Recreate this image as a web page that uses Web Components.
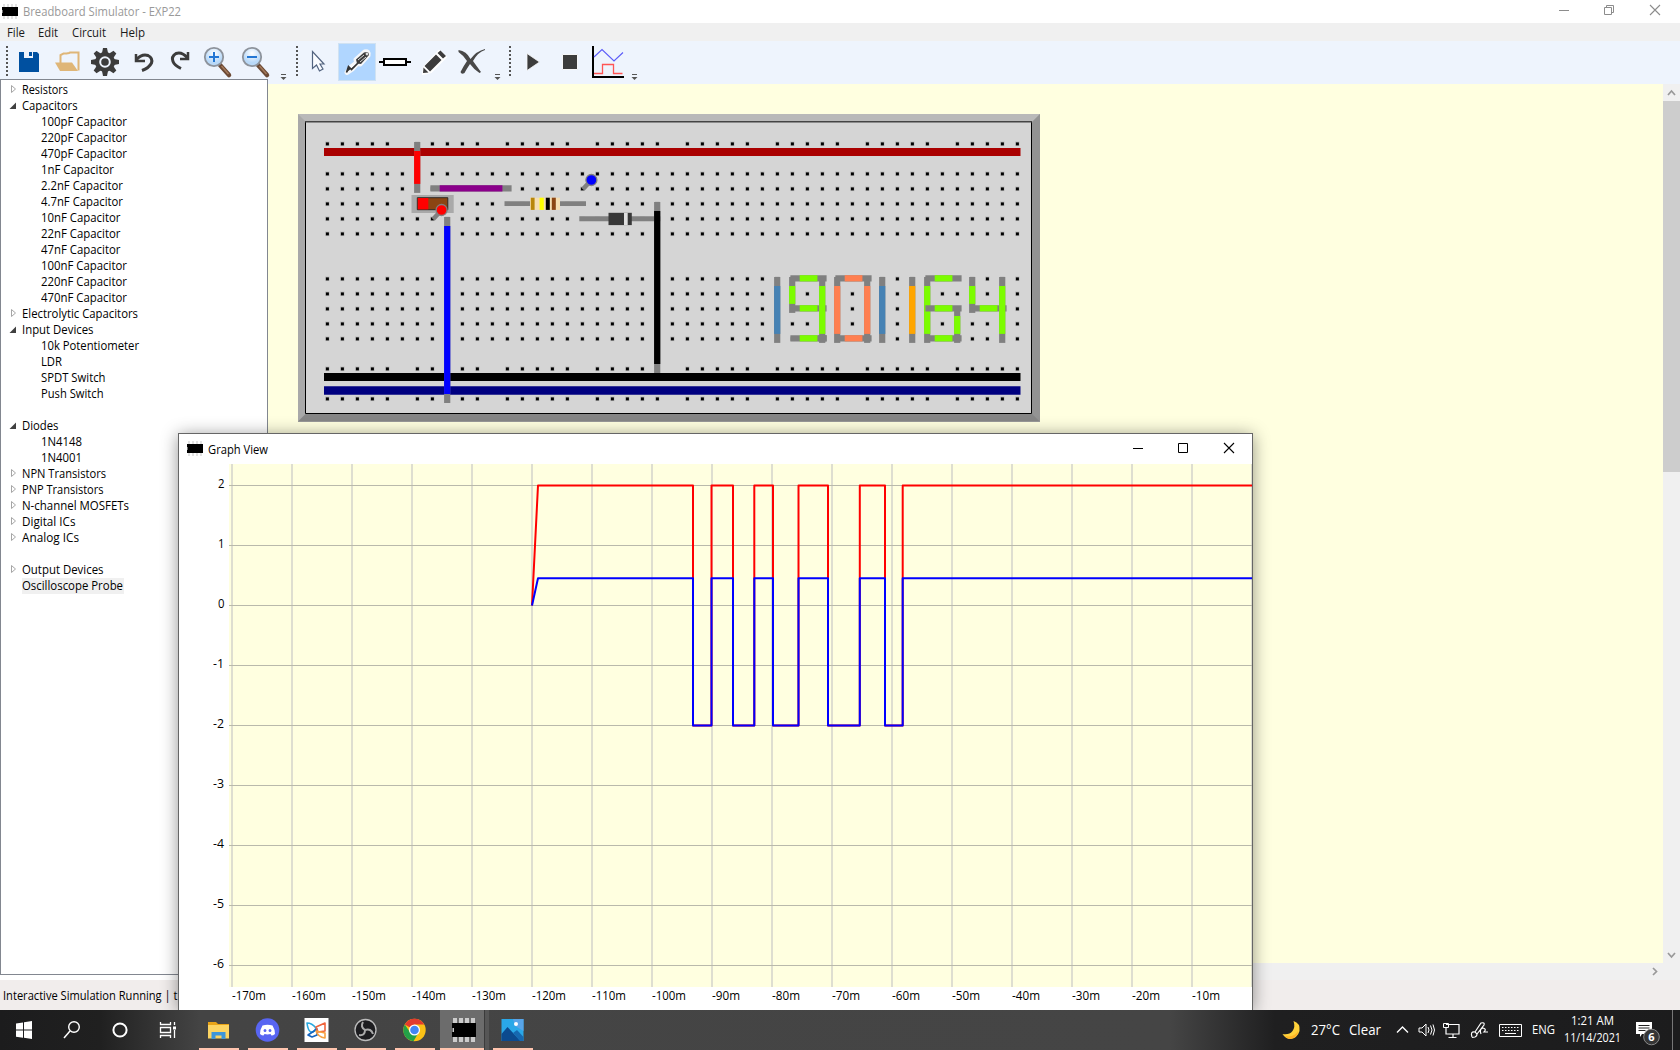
<!DOCTYPE html>
<html lang="en">
<head>
<meta charset="utf-8">
<title>Breadboard Simulator - EXP22</title>
<style>
html,body{margin:0;padding:0;width:1680px;height:1050px;overflow:hidden;background:#fff}
body{font-family:"Open Sans","Noto Sans",sans-serif;font-size:12px;color:#000}
</style>
</head>
<body>
<sim-desktop></sim-desktop>
<script>
const define=(name,html,init)=>customElements.define(name,class extends HTMLElement{
  connectedCallback(){
    if(this.shadowRoot)return;
    this.attachShadow({mode:'open'}).innerHTML=typeof html==='function'?html(this):html;
    if(init)init(this,this.shadowRoot);
  }
});

/* Single line of text set to a given advance width */
define('fit-text','<style>:host{display:inline-block;white-space:nowrap;line-height:16px}span{display:inline-block;transform-origin:0 50%}</style><span><slot></slot></span>',(el,root)=>{
  const w=+el.getAttribute('w'),s=root.querySelector('span');
  if(!w)return;
  const n=s.getBoundingClientRect().width;
  el.style.width=w+'px';
  if(n)s.style.transform=`scaleX(${w/n})`;
});

define('chip-icon',el=>{
  const b=el.hasAttribute('big');
  return `<style>:host{display:block;line-height:0}</style>`+(b?
  `<svg width="24" height="24" viewBox="0 0 24 24"><path d="M1 0h4v24H1zM7 0h4v24H7zM13 0h4v24h-4zM19 0h4v24h-4z" fill="#ccc"/><path d="M0 5h24v14H0v-5h2v-4H0z" fill="#000"/></svg>`:
  `<svg width="16" height="16" viewBox="0 0 16 16"><path d="M1 0h2v15H1zM5 0h2v15H5zM9 0h2v15H9zM13 0h2v15h-2z" fill="#e2e2e2"/><path d="M0 3h16v9H0z" fill="#000"/><path d="M0 6h1v3H0z" fill="#777"/></svg>`);
});

define('title-bar',`<style>
:host{display:flex;height:23px;background:#fff;align-items:center;color:#999}
chip-icon{margin:0 5px 0 2px} .sp{flex:1} svg{display:block}
fit-text{margin-top:1px}
</style><chip-icon></chip-icon><fit-text w="158">Breadboard Simulator - EXP22</fit-text><div class="sp"></div>
<svg width="140" height="23" fill="none" stroke="#8c8c8c"><path d="M19 10.5h10"/><path d="M64.500 7.500h7v7h-7zM66.500 7V5.500h7v7H72"/><path d="M110 5l10 10M120 5l-10 10" stroke-width="1.1"/></svg>`);

define('menu-bar',`<style>:host{display:flex;height:18px;box-sizing:border-box;padding-top:2px;background:#f0f0f0;align-items:center;padding-left:6.800px;gap:13.700px;color:#1a1a1a}
</style><fit-text w="18">File</fit-text><fit-text w="20">Edit</fit-text><fit-text w="34">Circuit</fit-text><fit-text w="25">Help</fit-text>`);

const gearTeeth=[...Array(8)].map((_,i)=>`<path d="M16 10l1-5h4l1 5z" transform="rotate(${i*45} 19 19)"/>`).join('');
const lens=(id,plus)=>`<defs><radialGradient id="${id}" cx=".5" cy=".3"><stop offset="0" stop-color="#fff"/><stop offset="1" stop-color="#b9d9f8"/></radialGradient></defs><path d="M20 22l9 10" stroke="#6c4a35" stroke-width="4.500" stroke-linecap="round"/><path d="M21.500 23l7 8" stroke="#a57a5b" stroke-width="1.500"/><circle cx="14" cy="14" r="9.200" fill="url(#${id})" stroke="#8d939c" stroke-width="1.800"/><path d="M9 14h10${plus?'M14 9v10':''}" stroke="#2377d4" stroke-width="2"/>`;
const icons={
save:'<path d="M9 9h5v6h9V9h4l2 2v18H9z" fill="#0050a0"/><path d="M14 9h9v6h-9z" fill="#eef4fd"/><path d="M19 9h3v4h-3z" fill="#0050a0"/>',
folder:'<path d="M12.500 20v-8l3-1.500h3L21 10l1-.5h8.500v18" fill="none" stroke="#dfb678" stroke-width="2"/><path d="M7 19.500h17l6 8.500H12z" fill="#dfb678"/>',
gear:`<g fill="#3c3c3c">${gearTeeth}<circle cx="19" cy="19" r="10"/></g><g fill="none" stroke="#eef4fd" stroke-width="2"><circle cx="19" cy="19" r="4.800"/></g>`,
undo:'<path d="M12 11v7h9" fill="none" stroke="#3c3c3c" stroke-width="2.500"/><path d="M12.500 16.500Q18 10.500 24 12.500Q29 15 27.500 20Q25 25 18 27.500" fill="none" stroke="#3c3c3c" stroke-width="3"/>',
redo:'<path d="M26 9v7h-8" fill="none" stroke="#3c3c3c" stroke-width="2.500"/><path d="M25.500 15Q20 8.500 14 10.500Q9 13.500 11 18.500Q12.500 22.500 19 25.500" fill="none" stroke="#3c3c3c" stroke-width="3"/>',
zin:lens('a',true),zout:lens('b',false),
cursor:'<path d="M12.500 8.500v17l4-3.500 3 6 3.500-2-3-5h4z" fill="#fafcff" stroke="#52637f" stroke-width="1.200"/>',
driver:'<path d="M8.500 29.500l4.500-6 5-4-.5-3 9-8q5-1 4 4l-8 9-3-.5-4.500 5-6 4z" fill="#f5f7fa" stroke="#f5f7fa" stroke-width="4" stroke-linejoin="round"/><path d="M8.500 29.500l2-6 3 3 7-7" fill="#333" stroke="#333" stroke-width="1.700"/><path d="M18 16.500l8-7q5-2 5 2.500l-8 9-4-.5z" fill="#3c3c3c"/><path d="M20 17l6-5M22 19l6-5" stroke="#ddd"/><circle cx="29" cy="11" r="1.400" fill="#ddd"/>',
resistor:'<path d="M3 19h32" stroke="#000" stroke-width="2"/><path d="M8 16h22v6H8z" fill="#fff" stroke="#000" stroke-width="2"/>',
pencil:'<path d="M9 31l1-7L25 8l7 6-15 15z" fill="#fff" stroke="#fff" stroke-width="2"/><path d="M9 30l.5-5.500 5 5zM10.500 23L22 11.500l5.500 5.500L16 28.500zM23.500 10l3-2.500 5.500 5.500-3 2.500z" fill="#3c3c3c"/>',
cross:'<path d="M6.500 7q8 1 12 9 6-8 14.500-10v1q-7 2-12 11 5 7 8 11l-1.500 1q-6-4-9.500-9-4 6-5.500 9-3 2-4-1 3-6 6.500-11Q11 12 6.500 9z" fill="#484848"/>',
play:'<path d="M14 10.500v17L26.500 19z" fill="#3c3c3c" stroke="#f7f7f7" stroke-width=".8"/>',
stop:'<path d="M11.500 11.500h15v15h-15z" fill="#3c3c3c" stroke="#f7f7f7" stroke-width="1"/>',
graph:'<path d="M4 3v31h31" fill="none" stroke="#000" stroke-width="2"/><path d="M5 14l8-7.500 12 11.500 9-8.500" fill="none" stroke="#5b5bf8" stroke-width="1.100"/><path d="M5 30.500h8.500v-9h11v9h9" fill="none" stroke="#f55" stroke-width="1.300"/>'};
define('tool-button',el=>`<style>:host{display:block;width:38px;height:38px;box-sizing:border-box}:host([active]){background:#b0d6ff;box-shadow:inset 0 0 0 1px #d0e2f2}svg{display:block}</style><svg width="38" height="38" viewBox="0 0 38 38">${icons[el.getAttribute('icon')]}</svg>`);
define('tool-group',`<style>:host{display:flex;height:43px;padding-top:2px;box-sizing:border-box}
.grip{width:4px;padding-left:6px;height:34px;flex:none}.end{width:14px;flex:none}svg{display:block}</style>
<div class="grip"><svg width="2" height="36"><path d="M1 3v31" stroke="#555" stroke-width="2" stroke-dasharray="2 2"/></svg></div><slot></slot><div class="end"><svg width="14" height="38"><path d="M5 31.500h5" stroke="#555"/><path d="M4.500 34h6L7.500 37z" fill="#555"/></svg></div>`);
const tb=l=>l.split(' ').map(i=>`<tool-button icon="${i}"${i==='driver'?' active':''}></tool-button>`).join('');
define('tool-bar',`<style>:host{display:flex;height:43px;background:#eef4fd}tool-group:first-of-type{width:290px}</style>
<tool-group>${tb('save folder gear undo redo zin zout')}</tool-group><tool-group>${tb('cursor driver resistor pencil cross')}</tool-group><tool-group style="margin-left:-1px">${tb('play stop graph')}</tool-group>`);

define('tree-item',el=>{
  const s=el.getAttribute('state');
  const mark=s==='open'?'<path d="M9 8.500V15H2.500z" transform="translate(6 -4)" fill="#404040"/>':s==='closed'?'<path d="M11.500 4.500v7l4-3.500z" transform="translate(-1 -1)" fill="#fff" stroke="#a6a6a6"/>':'';
  return `<style>:host{display:flex;height:16px;align-items:center}svg{flex:none;display:block}:host([child]) svg{width:40px}.l{height:16px;padding:0 1px 0 0}:host([selected]) .l{background:#f0f0f0}fit-text{display:block}</style><svg width="21" height="16">${mark}</svg><div class="l"><fit-text w="${el.getAttribute('w')}">${el.getAttribute('label')}</fit-text></div>`;
});
const tree=[['c','Resistors',46],['o','Capacitors',55.5],['','100pF Capacitor',86],['','220pF Capacitor',86],['','470pF Capacitor',86],['','1nF Capacitor',73],['','2.2nF Capacitor',82],['','4.7nF Capacitor',82],['','10nF Capacitor',79.500],['','22nF Capacitor',79.500],['','47nF Capacitor',79.500],['','100nF Capacitor',86],['','220nF Capacitor',86],['','470nF Capacitor',86],['c','Electrolytic Capacitors',116],['o','Input Devices',71.500],['','10k Potentiometer',98],['','LDR',21],['','SPDT Switch',64.500],['','Push Switch',62.500],null,['o','Diodes',36.500],['','1N4148',41],['','1N4001',41],['c','NPN Transistors',84],['c','PNP Transistors',81.500],['c','N-channel MOSFETs',107],['c','Digital ICs',53.500],['c','Analog ICs',57],null,['c','Output Devices',81.500],['s','Oscilloscope Probe',101]];
define('parts-tree',`<style>:host{display:block;width:268px;height:896px;box-sizing:border-box;border:1px solid #828790;background:#fff;padding-top:2px}.gap{height:16px}</style>`+
 tree.map(t=>t?`<tree-item label="${t[1]}" w="${t[2]}" ${t[0]===''?'child':t[0]==='s'?'selected':`state="${t[0]==='o'?'open':'closed'}"`}></tree-item>`:'<div class="gap"></div>').join(''));

/* Breadboard: viewBox origin is its outer top-left corner */
const X=c=>327.4+15*c, rowsTop=[173.7,188.7,203.7,218.7,233.7], rowsBot=[278.7,293.7,308.7,323.7,338.7];
function board(){
  let s='';
  const hole=(x,y)=>{s+=`<path d="M${x-2.4} ${y-2.2}h4.600v4.600h-4.600z" fill="#bdbdbd"/><path d="M${x-1.5} ${y-1.3}h3v3h-3z" fill="#000"/>`};
  for(let c=0;c<47;c++){
    if(c%6!==5)for(const y of[143.7,368.7,398.7])hole(X(c),y);
    for(const y of[...rowsTop,...rowsBot])hole(X(c),y);
  }
  const bar=(y,h,f)=>{s+=`<path d="M324 ${y}h696.500v${h}H324z" fill="${f}"/>`};
  bar(148,8,'#aa0000');bar(373,8,'#000');bar(386.2,8.5,'#000080');
  const v=(c,y1,y2,f)=>{const x=X(c)-3.300;s+=`<path d="M${x} ${y1-1.700}h6.200v${y2-y1+5.900}h-6.200z" fill="#808080"/><path d="M${x} ${y1+7.300}h6.200v${y2-y1-12.100}h-6.200z" fill="${f}"/>`};
  const h=(c1,c2,y,f)=>{const x=X(c1)-2,w=X(c2)-X(c1)+6.200;s+=`<path d="M${x} ${y-3.500}h${w}v6.200H${x}z" fill="#808080"/><path d="M${x+9.300} ${y-3.500}h${w-18.500}v6.200h${18.500-w}z" fill="${f}"/>`};
  v(6,143.7,188.7,'#f00');h(7,12,188.7,'#8b008b');
  s+='<path d="M411.500 195h42.200v18h-42.200z" fill="#a9a9a9"/><path d="M417.300 197.700h30.500v12h-30.500z" fill="#8b4513" stroke="#222" stroke-width=".9"/><path d="M417.800 198h10.500v11.400h-10.500z" fill="#f00"/>';
  v(8,218.7,398.7,'#00f');
  s+='<path d="M504.500 201.200h81.500v4.900h-81.500z" fill="#808080"/><path d="M530 197.700h30v12.200h-30z" fill="#f5deb3"/><path d="M530.800 197.700h3.800v12.200h-3.800z" fill="#b8860b"/><path d="M539.600 197.700h4.200v12.200h-4.200z" fill="#ff0"/><path d="M545.800 197.700h4v12.200h-4z" fill="#000"/><path d="M551.800 197.700h4v12.200h-4z" fill="#8b4513"/>';
  s+='<path d="M579.300 216.300h81v5h-81z" fill="#808080"/><path d="M608.500 212.800h23.300v12.300h-23.300z" fill="#383838"/><path d="M624 212.800h3.700v12.300H624z" fill="#e0e0e0"/>';
  v(22,203.7,368.7,'#000');
  const probe=(x,y,f)=>{s+=`<path d="M${x} ${y}l-8.500 9.300" stroke="#808080" stroke-width="4.500"/><circle cx="${x}" cy="${y}" r="5.500" fill="${f}" stroke="#808080" stroke-width="1.300"/>`};
  probe(441.6,210,'#f00');probe(591.4,180,'#00f');
  const [a,,m,,z]=rowsBot,g='#7cfc00',o='#ff7f50',b='#4682b4';
  v(30,a,z,b);
  h(31,33,a,g);v(31,a,m,g);h(31,33,m,g);v(33,a,z,g);h(31,33,z,g);
  s+=`<path d="M${X(33)-4.2} ${z-3.500}h8.500v6.200h-8.500z" fill="#808080"/>`;
  h(34,36,a,o);v(34,a,z,o);v(36,a,z,o);h(34,36,z,o);
  v(37,a,z,b);v(39,a,z,'#ffa500');
  h(40,42,a,g);v(40,a,z,g);h(40,42,m,g);v(42,m,z,g);h(40,42,z,g);
  v(43,a,m,g);h(43,45,m,g);v(45,a,z,g);
  return s;
}
define('bread-board',`<style>:host{display:block;width:742px;height:308px}svg{display:block}</style>
<svg width="742" height="308" viewBox="298 114 742 308"><path d="M298 114h742v308H298z" fill="#a9a9a9"/><path d="M298 114h742l-8 8H306z" fill="#b9b9b9"/><path d="M1040 114v307.500l-8-8V122z" fill="#939393"/><path d="M298 421.500h742l-8-8H306z" fill="#868686"/><path d="M305.500 121.500h726v292h-726z" fill="#d5d5d5" stroke="#000"/><path d="M305 121.700h727" stroke="#444" stroke-width="1.500"/>${board()}</svg>`);

define('scroll-v',`<style>:host{display:flex;flex-direction:column;width:17px;height:879px;background:#f0f0f0}.t{height:371px;background:#cdcdcd}.f{flex:1}svg{display:block}</style>
<svg width="17" height="17"><path d="M5 11l3.500-4 3.500 4" fill="none" stroke="#999" stroke-width="1.700"/></svg><div class="t"></div><div class="f"></div><svg width="17" height="17"><path d="M5 7l3.500 4L12 7" fill="none" stroke="#999" stroke-width="1.700"/></svg>`);
define('work-area',`<style>:host{display:block;width:1412px}.row{display:flex}.canvas{width:1395px;height:879px;background:#ffffe0;box-sizing:border-box;padding:30px 0 0 30px}.h{height:17px;background:#f0f0f0;display:flex;justify-content:flex-end;padding-right:17px}svg{display:block}</style>
<div class="row"><div class="canvas"><bread-board></bread-board></div><scroll-v></scroll-v></div><div class="h"><svg width="17" height="17"><path d="M7 5l3.500 3.500L7 12" fill="none" stroke="#999" stroke-width="1.700"/></svg></div>`);
define('status-bar',`<style>:host{display:flex;height:30px;background:#f1edec;align-items:center;padding:2px 0 0 3px;box-sizing:border-box}</style><fit-text w="174.500">Interactive Simulation Running | t</fit-text>`);

define('graph-plot',()=>{
  let s='<path d="M229 464h1023v523H229z" fill="#ffffe0"/>';
  for(let x=232;x<1253;x+=60)s+=`<path d="M${x} 464v523" stroke="#deded0" stroke-width="2"/>`;
  for(let y=485.5;y<987;y+=60)s+=`<path d="M229 ${y}h1023" stroke="#b9b9ab"/>`;
  const e=[693,711.5,733,754.3,773,798.5,828,859.8,885,902.7];
  const line=(hi,col)=>{let d=`M532 605.500L538 ${hi}`,low=false;e.forEach(x=>{d+=`H${x}V${low?hi:725.5}`;low=!low});return `<path d="${d}H1252" fill="none" stroke="${col}" stroke-width="2" stroke-linejoin="round"/>`};
  s+=line(485.5,'#f00')+line(578.2,'#00f');
  return `<style>:host{display:flex;flex-direction:column;height:546px}.main{display:flex}.y{width:45px;padding:12px 0 0 0;display:flex;flex-direction:column;gap:44px;height:511px;box-sizing:border-box;align-items:flex-end;margin-right:5px}.x{display:flex;padding:0 0 0 53px;height:18px}.x div{width:60px;flex:none}svg{display:block}.main{height:523px}.y fit-text{height:16px}</style>
  <div class="main"><div class="y">${[2,1,0,-1,-2,-3,-4,-5,-6].map(n=>`<fit-text w="${n<0?11:6.5}">${n}</fit-text>`).join('')}</div><svg width="1023" height="523" viewBox="229 464 1023 523">${s}</svg></div>
  <div class="x">${[...Array(17)].map((_,i)=>`<div><fit-text w="${i>7?28:34}">-${170-i*10}m</fit-text></div>`).join('')}</div>`;
});
define('graph-window',`<style>:host{display:block;width:1073px;height:576px;border:1px solid #666;border-bottom:0;background:#fff;box-shadow:0 2px 16px rgba(0,0,0,.42)}.t{display:flex;height:30px;align-items:center}chip-icon{margin:0 5px 0 8px}.sp{flex:1}svg{display:block}fit-text{margin-top:1px}</style>
<div class="t"><chip-icon></chip-icon><fit-text w="60">Graph View</fit-text><div class="sp"></div><svg width="140" height="30" fill="none" stroke="#000"><path d="M21 14.500h10M66.500 9.500h9v9h-9z"/><path d="M112 9l10 10M122 9l-10 10" stroke-width="1.100"/></svg></div><graph-plot></graph-plot>`);

const apps={
start:'<path d="M16 13.500l7-1v7h-7zM24 12.300l8-1.300v8.500h-8zM16 20.500h7v7.200l-7-1zM24 20.500h8V29l-8-1.200z" fill="#fff"/>',
search:'<circle cx="26" cy="17" r="5.300" fill="none" stroke="#fff" stroke-width="1.400"/><path d="M22 21l-6 7" stroke="#fff" stroke-width="1.500"/>',
cortana:'<circle cx="24" cy="20" r="6.600" fill="none" stroke="#fff" stroke-width="2"/>',
task:'<path d="M16.500 12v2.500h10V12M16.500 28v-2.500h10V28M16.500 17.500h10v5h-10zM30.500 12v3M30.500 20v8" fill="none" stroke="#fff" stroke-width="1.300"/><path d="M29 16.500h3v3h-3z" fill="#fff"/>',
files:'<path d="M14 12h8l2 2h11v14H14z" fill="#e8a317"/><path d="M14 15h21v13.500H14z" fill="#fcd462"/><path d="M17.500 29v-7h14v7h-4v-3.500h-6V29z" fill="#3d95d8"/>',
discord:'<circle cx="24.500" cy="20" r="11.800" fill="#5865f2"/><path d="M19.500 15.500q5-1.500 10 0 2.500 4 2.500 8.500-2 1.500-3.500 1.500l-1-1.500q-3 .8-6 0l-1 1.500q-1.500 0-3.500-1.500 0-4.500 2.500-8.500z" fill="#fff"/><ellipse cx="22" cy="20.500" rx="1.400" ry="1.600" fill="#5865f2"/><ellipse cx="27" cy="20.500" rx="1.400" ry="1.600" fill="#5865f2"/>',
fly:'<path d="M12.500 8h24v24h-24z" fill="#fff"/><g fill="none" stroke-width="1.600" stroke-linejoin="round"><path d="M15 13q5 0 9 5-2 5-5 4-3-1-4-9z" stroke="#29a9e0"/><path d="M16 25l9-6v6l-5 2z" stroke="#1464c0"/><path d="M24 17l9-4v8l-7 1z" stroke="#f0643c"/><path d="M24 21l9 2v5q-7-1-9-7z" stroke="#f8a040"/></g>',
obs:'<circle cx="24.500" cy="20" r="10.500" fill="#1d1d20" stroke="#bbb" stroke-width="1.300"/><g stroke="#aaa" stroke-width="2" fill="none"><path d="M24 20q-5-3-2-8M24 20q6-2 8 4M24 20q0 6-6 5"/></g>',
chrome:'<circle cx="24.500" cy="20" r="11.200" fill="#fbc116"/><path d="M24.500 20L14.800 14.400a11.200 11.200 0 0 1 19.400 0H24.500z" fill="#e33b2e"/><path d="M14.800 14.400a11.200 11.200 0 0 0 8.700 16.800l5-8.400-8.500-.5z" fill="#24a148"/><circle cx="24.500" cy="20" r="5.500" fill="#fff"/><circle cx="24.500" cy="20" r="4.300" fill="#4285f4"/>',
photos:'<path d="M13.500 9h22v22h-22z" fill="#2aa8e8"/><path d="M25 9h10.500v12L27 16z" fill="#58a4e8"/><path d="M13.500 24l6-7 13 14h-19z" fill="#0c4a8e"/><path d="M25 23l4-3 6.500 7v4H32z" fill="#1668b0"/><circle cx="28" cy="14" r="2" fill="#fff"/>'};
define('task-app',el=>{const k=el.getAttribute('icon'),run=el.hasAttribute('run');
return `<style>:host{display:flex;flex-direction:column;align-items:center;width:${run?49:48}px;height:40px;box-sizing:border-box}:host([active]){background:linear-gradient(90deg,#6c6c6c 0 44.500px,#3b3b3b 44.500px 45.500px,#565656 45.500px)}:host([active]) .u{width:44px;align-self:flex-start}:host([active]) chip-icon{margin:8px 0 6px 0}svg{display:block}:host([run]) svg{margin-right:2px}.u{width:40px;height:2px;background:#ffc4ae}</style>${k==='chip'?'<chip-icon big></chip-icon>':`<svg width="${run?49:48}" height="38">${apps[k]}</svg>`}${run?'<div class="u"></div>':''}`});
define('task-bar',`<style>
:host{display:flex;height:40px;background:linear-gradient(90deg,#1c1c1d 0,#202020 100px,#444 200px,#454545 1170px,#1f1f20 1275px,#1c1c1d);color:#fff}
.apps{display:flex;padding-left:2.500px}.sp{flex:1}.tray{display:flex;width:399px;align-items:center;font-size:12px}svg{display:block;flex:none}.w{font-size:14px;display:flex;gap:9px;margin-left:6px}.eng{margin-left:1px}.clock{width:60px;display:flex;flex-direction:column;align-items:center;margin:-1px 0 0 8.500px;gap:1.500px}
.n{font:bold 11px "Open Sans",sans-serif;fill:#fff}
</style>
<task-app icon="start"></task-app><task-app icon="search"></task-app><task-app icon="cortana"></task-app><task-app icon="task"></task-app>
<div class="apps">${['files','discord','fly','obs','chrome'].map(i=>`<task-app run icon="${i}"></task-app>`).join('')}<task-app run active icon="chip"></task-app><task-app run icon="photos"></task-app></div>
<div class="sp"></div>
<div class="tray"><svg width="24" height="40"><path d="M12.500 11q7 2 6 10-2 7-9 8-5 0-8-5 7 1 10-3 3-4 1-10z" fill="#ffd23b"/><path d="M4 26q9 2 13-5 0 6-7 8-4 0-6-3z" fill="#ffb226"/></svg>
<div class="w"><fit-text w="29">27°C</fit-text><fit-text w="32">Clear</fit-text></div>
<svg width="150" height="40" fill="none" stroke="#fff"><g transform="translate(-4 0)"><path d="M20 22.500l5.500-5.500 5.500 5.500" stroke-width="1.400"/><path d="M42 18h3l4-4v12l-4-4h-3zM51 17q2 3 0 6M53.500 15.500q3 4.500 0 9M56 14.500q3 5.500 0 11"/><path d="M69 14.500h13v9.500H69v-6M76 24v3M71.500 27.500h8" stroke-width="1.200"/><path d="M66.500 13.500h5v4h-5z"/><path d="M95 27q-2-6 3-5 4 3 0 5l-3 .5M98 22l6-9q4-1 3 2l-7 9M104 24q-2-5 2-6 4 1 1 4h4" stroke-width="1.200"/><path d="M122.500 14.500h22v12h-22z"/><path d="M125 17.500h18M125 20.500h18" stroke-dasharray="1.500 1.500"/><path d="M128 23.500h11"/></g></svg>
<fit-text class="eng" w="23">ENG</fit-text>
<div class="clock"><fit-text w="43">1:21 AM</fit-text><fit-text w="57">11/14/2021</fit-text></div>
<svg width="54" height="40" style="margin-left:13px"><path d="M2 12h16v12H8l-2 3v-3H2z" fill="#fff"/><path d="M4.500 15.500h11M4.500 18h11M4.500 20.500h7" stroke="#222"/><circle cx="17.500" cy="27" r="7.800" fill="#353535" stroke="#888"/><text class="n" x="14.300" y="31">6</text><path d="M38.500 0v40" stroke="#777"/></svg></div>`);

define('sim-desktop',`<style>:host{display:block;width:1680px;height:1050px;overflow:hidden;position:relative}.body{display:flex;height:896px;align-items:flex-start}parts-tree{margin-top:-5px}graph-window{position:absolute;left:178px;top:433px}task-bar{position:relative}</style>
<title-bar></title-bar><menu-bar></menu-bar><tool-bar></tool-bar><div class="body"><parts-tree></parts-tree><work-area></work-area></div><status-bar></status-bar><graph-window></graph-window><task-bar></task-bar>`);
</script>
</body>
</html>
